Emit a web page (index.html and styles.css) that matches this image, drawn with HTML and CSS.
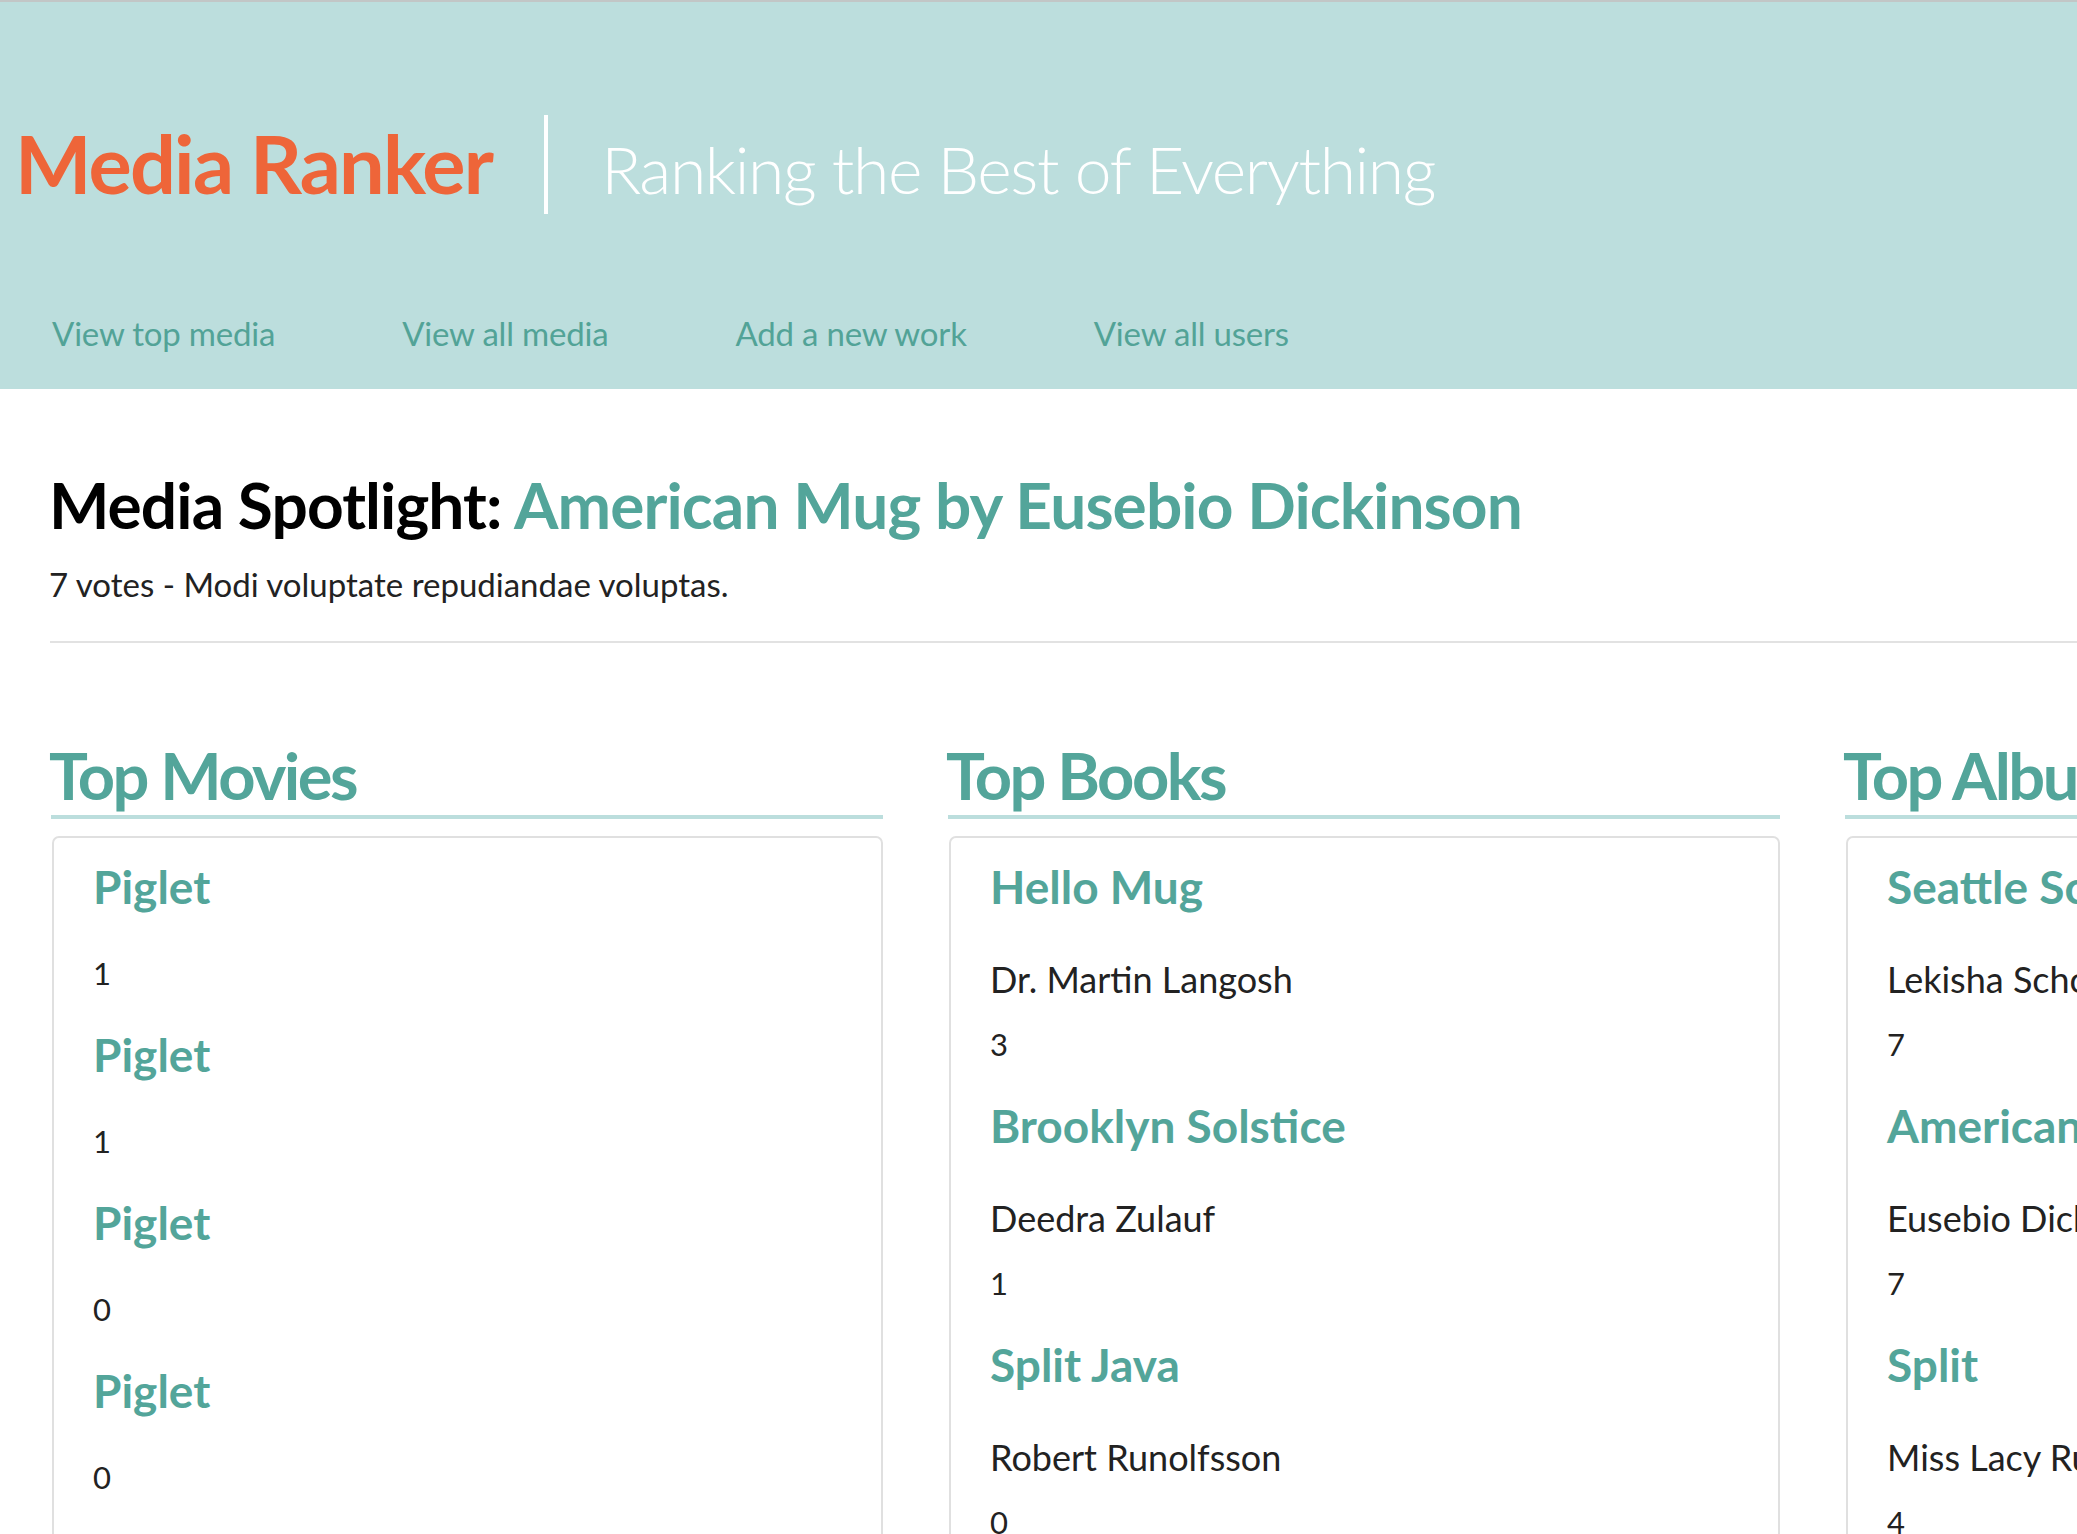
FILE: index.html
```html
<!DOCTYPE html>
<html lang="en">
<head>
<meta charset="utf-8">
<title>Media Ranker</title>
<link rel="stylesheet" href="styles.css">
</head>
<body>
<header class="site-header">
  <div class="brand-row">
    <h1 class="brand">Media Ranker</h1>
    <span class="divider"></span>
    <p class="tagline">Ranking the Best of Everything</p>
  </div>
  <nav class="main-nav">
    <a href="#">View top media</a>
    <a href="#">View all media</a>
    <a href="#">Add a new work</a>
    <a href="#">View all users</a>
  </nav>
</header>
<main class="content">
  <section class="spotlight">
    <h2 class="spotlight-title">Media Spotlight: <a href="#">American Mug by Eusebio Dickinson</a></h2>
    <p class="spotlight-sub">7 votes - Modi voluptate repudiandae voluptas.</p>
  </section>
  <hr class="rule">
  <div class="columns">
    <section class="column">
      <h2 class="column-title">Top Movies</h2>
      <ul class="card">
        <li class="item"><a class="item-title" href="#">Piglet</a><p class="votes">1</p></li>
        <li class="item"><a class="item-title" href="#">Piglet</a><p class="votes">1</p></li>
        <li class="item"><a class="item-title" href="#">Piglet</a><p class="votes">0</p></li>
        <li class="item"><a class="item-title" href="#">Piglet</a><p class="votes">0</p></li>
        <li class="item"><a class="item-title" href="#">Piglet</a><p class="votes">0</p></li>
      </ul>
    </section>
    <section class="column">
      <h2 class="column-title">Top Books</h2>
      <ul class="card">
        <li class="item"><a class="item-title" href="#">Hello Mug</a><p class="author">Dr. Martin Langosh</p><p class="votes">3</p></li>
        <li class="item"><a class="item-title" href="#">Brooklyn Solstice</a><p class="author">Deedra Zulauf</p><p class="votes">1</p></li>
        <li class="item"><a class="item-title" href="#">Split Java</a><p class="author">Robert Runolfsson</p><p class="votes">0</p></li>
        <li class="item"><a class="item-title" href="#">Piglet</a><p class="author">Mona Hettinger</p><p class="votes">0</p></li>
      </ul>
    </section>
    <section class="column">
      <h2 class="column-title">Top Albums</h2>
      <ul class="card">
        <li class="item"><a class="item-title" href="#">Seattle Score</a><p class="author">Lekisha Schowalter</p><p class="votes">7</p></li>
        <li class="item"><a class="item-title" href="#">American Mug</a><p class="author">Eusebio Dickinson</p><p class="votes">7</p></li>
        <li class="item"><a class="item-title" href="#">Split</a><p class="author">Miss Lacy Runte</p><p class="votes">4</p></li>
        <li class="item"><a class="item-title" href="#">Hello Java</a><p class="author">Tod Kertzmann</p><p class="votes">2</p></li>
      </ul>
    </section>
  </div>
</main>
</body>
</html>
```
FILE: styles.css
```css
html, body {
  margin: 0;
  padding: 0;
}
body {
  background: #ffffff;
  color: #1f1f1f;
  font-family: "Lato", "Liberation Sans", sans-serif;
  overflow-x: hidden;
}
a {
  text-decoration: none;
}

.site-header {
  background: #bcdedd;
  border-top: 2px solid #c2c6c6;
  padding: 113px 0 34px 0;
}
.brand-row {
  display: flex;
  align-items: flex-start;
  height: 99px;
}
.brand {
  margin: 0 0 0 15px;
  font-family: "Lato", sans-serif;
  font-weight: 700;
  font-size: 81px;
  line-height: 95px;
  letter-spacing: -1.8px;
  color: #ee6539;
  white-space: nowrap;
}
.divider {
  width: 4px;
  height: 99px;
  background: #ffffff;
  margin-left: 52px;
  flex: none;
}
.tagline {
  margin: 6px 0 0 53px;
  font-family: "Lato", sans-serif;
  font-weight: 300;
  font-size: 66px;
  line-height: 95px;
  letter-spacing: -1.4px;
  color: #ffffff;
  white-space: nowrap;
}
.main-nav {
  display: flex;
  gap: 127px;
  padding-left: 52px;
  margin-top: 97px;
}
.main-nav a {
  font-size: 33px;
  line-height: 44px;
  letter-spacing: -0.2px;
  color: #52a397;
  white-space: nowrap;
}

.content {
  padding-left: 51px;
}
.spotlight-title {
  margin: 78px 0 0 -2px;
  font-weight: 700;
  font-size: 64px;
  line-height: 76px;
  letter-spacing: -0.9px;
  color: #000000;
  white-space: nowrap;
}
.spotlight-title a {
  color: #53a59a;
}
.spotlight-sub {
  margin: 21px 0 0 -2px;
  font-size: 33px;
  line-height: 40px;
  color: #222222;
}
.rule {
  margin: 37px 0 0 -1px;
  border: 0;
  height: 2px;
  background: #e2e2e2;
  width: 2700px;
}

.columns {
  display: grid;
  grid-template-columns: repeat(3, 832px);
  column-gap: 65px;
  margin-top: 97px;
}
.column-title {
  margin: 0;
  padding: 0 0 5px 0;
  font-weight: 700;
  font-size: 65px;
  line-height: 70px;
  letter-spacing: -2.5px;
  color: #53a59a;
  border-bottom: 4px solid #bcdedd;
  white-space: nowrap;
  text-indent: -2px;
}
.card {
  list-style: none;
  margin: 17px 0 0 1px;
  padding: 21px 39px 40px 39px;
  border: 2px solid #e0e0e0;
  border-radius: 7px;
  min-height: 900px;
}
.item {
  margin-top: 32px;
}
.item:first-child {
  margin-top: 0;
}
.item-title {
  display: block;
  font-weight: 700;
  font-size: 46px;
  line-height: 56px;
  color: #53a59a;
  white-space: nowrap;
}
.author {
  margin: 42px 0 0 0;
  font-size: 36px;
  line-height: 44px;
  color: #222222;
  white-space: nowrap;
}
.votes {
  margin: 21px 0 0 0;
  font-size: 31px;
  line-height: 44px;
  color: #222222;
}
.item-title + .votes {
  margin-top: 36px;
}
```
